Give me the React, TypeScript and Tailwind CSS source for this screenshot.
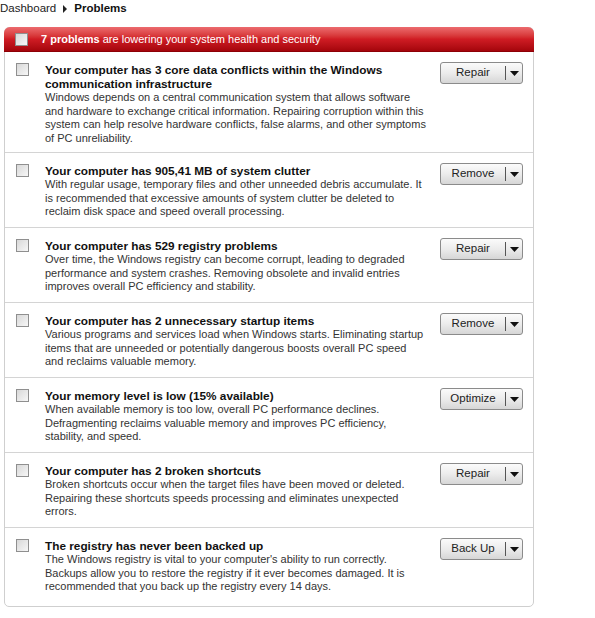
import React from 'react';

type Problem = {
  title: string;
  text: string;
  action: string;
  wide?: boolean;
};

const problems: Problem[] = [
  {
    title: 'Your computer has 3 core data conflicts within the Windows communication infrastructure',
    text: 'Windows depends on a central communication system that allows software and hardware to exchange critical information. Repairing corruption within this system can help resolve hardware conflicts, false alarms, and other symptoms of PC unreliability.',
    action: 'Repair',
    wide: true,
  },
  {
    title: 'Your computer has 905,41 MB of system clutter',
    text: 'With regular usage, temporary files and other unneeded debris accumulate. It is recommended that excessive amounts of system clutter be deleted to reclaim disk space and speed overall processing.',
    action: 'Remove',
  },
  {
    title: 'Your computer has 529 registry problems',
    text: 'Over time, the Windows registry can become corrupt, leading to degraded performance and system crashes. Removing obsolete and invalid entries improves overall PC efficiency and stability.',
    action: 'Repair',
  },
  {
    title: 'Your computer has 2 unnecessary startup items',
    text: 'Various programs and services load when Windows starts. Eliminating startup items that are unneeded or potentially dangerous boosts overall PC speed and reclaims valuable memory.',
    action: 'Remove',
  },
  {
    title: 'Your memory level is low (15% available)',
    text: 'When available memory is too low, overall PC performance declines. Defragmenting reclaims valuable memory and improves PC efficiency, stability, and speed.',
    action: 'Optimize',
  },
  {
    title: 'Your computer has 2 broken shortcuts',
    text: 'Broken shortcuts occur when the target files have been moved or deleted. Repairing these shortcuts speeds processing and eliminates unexpected errors.',
    action: 'Repair',
  },
  {
    title: 'The registry has never been backed up',
    text: "The Windows registry is vital to your computer's ability to run correctly. Backups allow you to restore the registry if it ever becomes damaged. It is recommended that you back up the registry every 14 days.",
    action: 'Back Up',
  },
];

const Checkbox: React.FC = () => (
  <span className="block w-[13px] h-[13px] border border-[#8f8f8f] bg-gradient-to-br from-[#d8d8d8] to-[#f7f7f7] shrink-0" />
);

const SplitButton: React.FC<{ label: string }> = ({ label }) => (
  <div className="flex h-[22px] w-[83px] rounded-[3px] border border-[#8b8b8b] bg-gradient-to-b from-[#fbfbfb] via-[#ececec] to-[#d6d6d6] text-[11.5px] text-[#222]">
    <span className="flex-1 flex items-center justify-center">{label}</span>
    <span className="w-[17px] flex items-center justify-center border-l border-[#555] my-[3px]">
      <svg width="9" height="5" viewBox="0 0 9 5">
        <path d="M0 0h9L4.5 5z" fill="#111" />
      </svg>
    </span>
  </div>
);

const App: React.FC = () => {
  return (
    <div className="w-[595px] h-[618px] bg-white font-['Liberation_Sans',Arial,sans-serif] text-[11px] overflow-hidden">
      {/* Breadcrumb */}
      <div className="flex items-center h-[17px] text-[11.5px] text-[#222]">
        <span>Dashboard</span>
        <svg width="10" height="8" viewBox="0 0 10 8" className="mx-[4px]">
          <path d="M3 0l4 4-4 4z" fill="#222" />
        </svg>
        <span className="font-bold text-[#111]">Problems</span>
      </div>

      {/* Panel */}
      <div className="ml-[4px] mt-[10px] w-[530px] rounded-[5px] border border-[#cfcfcf]">
        <div className="flex items-center h-[25px] -mx-px -mt-px rounded-t-[6px] bg-gradient-to-b from-[#ec6a6e] via-[#d01c24] to-[#a4050b] border-b border-[#8d0006] text-white text-[11px] pl-[11px]">
          <Checkbox />
          <span className="ml-[13px]">
            <b>7 problems</b> are lowering your system health and security
          </span>
        </div>

        {problems.map((p, i) => (
          <div
            key={i}
            className={`flex pl-[11px] pr-[10px] pt-[11px] ${i === 0 ? 'h-[101px]' : i === problems.length - 1 ? 'h-[78px]' : 'h-[75px]'} ${i < problems.length - 1 ? 'border-b border-[#d4d4d4]' : ''}`}
          >
            <Checkbox />
            <div className={`ml-[16px] ${p.wide ? 'w-[385px]' : 'w-[380px]'} text-[#333] leading-[13.5px]`}>
              <div className="font-bold text-[#111] text-[11.8px] leading-[14px]">{p.title}</div>
              <div>{p.text}</div>
            </div>
            <div className="ml-auto -mt-[1px]">
              <SplitButton label={p.action} />
            </div>
          </div>
        ))}
      </div>
    </div>
  );
};

export default App;
